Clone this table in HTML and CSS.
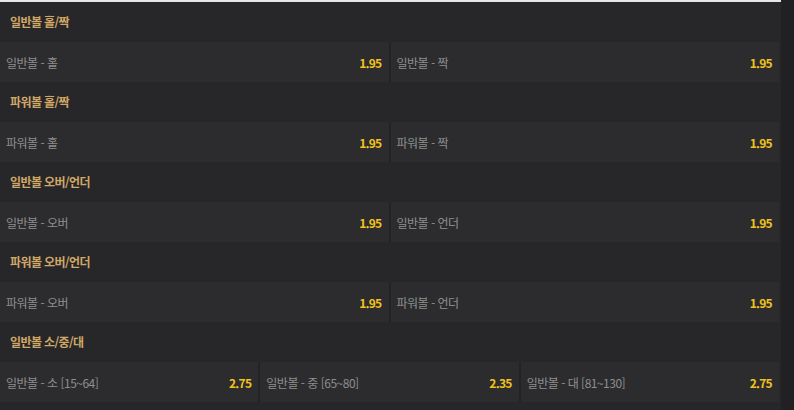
FILE: index.html
```html
<!DOCTYPE html>
<html lang="ko">
<head>
    <meta charset="UTF-8">
    <meta name="viewport" content="width=device-width, initial-scale=1.0">
    <title>파워볼 배당</title>
    <link rel="stylesheet" href="styles.css">
</head>
<body>
    <div class="page">
        <div class="board">
            <div class="market">
                <div class="market-title">일반볼 홀/짝</div>
                <div class="odds-row cols-2">
                    <div class="pick"><span class="pick-name">일반볼 - 홀</span><span class="pick-odds">1.95</span></div>
                    <div class="pick"><span class="pick-name">일반볼 - 짝</span><span class="pick-odds">1.95</span></div>
                </div>
            </div>
            <div class="market">
                <div class="market-title">파워볼 홀/짝</div>
                <div class="odds-row cols-2">
                    <div class="pick"><span class="pick-name">파워볼 - 홀</span><span class="pick-odds">1.95</span></div>
                    <div class="pick"><span class="pick-name">파워볼 - 짝</span><span class="pick-odds">1.95</span></div>
                </div>
            </div>
            <div class="market">
                <div class="market-title">일반볼 오버/언더</div>
                <div class="odds-row cols-2">
                    <div class="pick"><span class="pick-name">일반볼 - 오버</span><span class="pick-odds">1.95</span></div>
                    <div class="pick"><span class="pick-name">일반볼 - 언더</span><span class="pick-odds">1.95</span></div>
                </div>
            </div>
            <div class="market">
                <div class="market-title">파워볼 오버/언더</div>
                <div class="odds-row cols-2">
                    <div class="pick"><span class="pick-name">파워볼 - 오버</span><span class="pick-odds">1.95</span></div>
                    <div class="pick"><span class="pick-name">파워볼 - 언더</span><span class="pick-odds">1.95</span></div>
                </div>
            </div>
            <div class="market">
                <div class="market-title">일반볼 소/중/대</div>
                <div class="odds-row cols-3">
                    <div class="pick"><span class="pick-name">일반볼 - 소 [15~64]</span><span class="pick-odds">2.75</span></div>
                    <div class="pick"><span class="pick-name">일반볼 - 중 [65~80]</span><span class="pick-odds">2.35</span></div>
                    <div class="pick"><span class="pick-name">일반볼 - 대 [81~130]</span><span class="pick-odds">2.75</span></div>
                </div>
            </div>
        </div>
        <div class="side-strip"></div>
    </div>
</body>
</html>
```

FILE: styles.css
```css
html, body {
    margin: 0;
    padding: 0;
    background-color: #222224;
}
body {
    font-family: "Noto Sans CJK KR", "Noto Sans", sans-serif;
    font-size: 12px;
    color: #8e8e8e;
}
.page {
    display: flex;
    height: 410px;
}
.board {
    width: 781px;
    background-color: #27272a;
    border-top: 2px solid #e6e6e6;
    padding-right: 2px;
    box-sizing: border-box;
}
.side-strip {
    flex: 1;
    background-color: #212123;
}
.market-title {
    height: 40px;
    line-height: 40px;
    padding-left: 10px;
    color: #d0a766;
    font-weight: bold;
    letter-spacing: -0.6px;
}
.odds-row {
    display: grid;
    gap: 2px;
    height: 40px;
    background-color: #232326;
}
.cols-2 {
    grid-template-columns: 1fr 1fr;
}
.cols-3 {
    grid-template-columns: 1fr 1fr 1fr;
}
.pick {
    display: flex;
    align-items: center;
    justify-content: space-between;
    padding: 0 7px 0 6px;
    background-color: #2c2c2f;
}
.pick-name {
    letter-spacing: -0.5px;
}
.pick-odds {
    color: #f2c21b;
    font-weight: bold;
    letter-spacing: -0.7px;
}
```
